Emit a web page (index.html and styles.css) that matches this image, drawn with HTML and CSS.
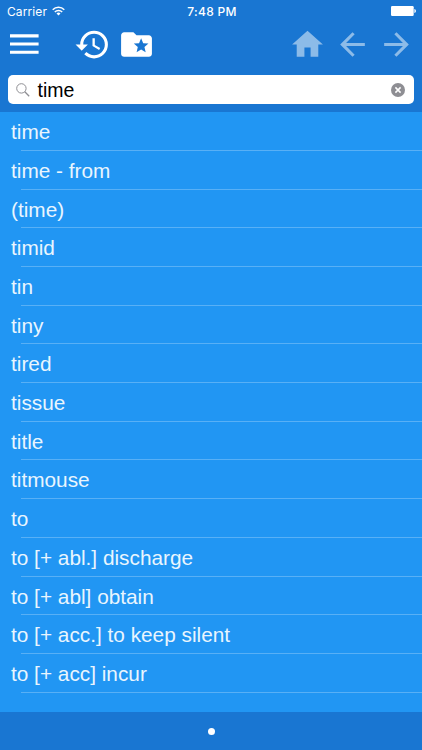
FILE: index.html
```html
<!DOCTYPE html>
<html lang="en">
<head>
<meta charset="UTF-8">
<meta name="viewport" content="width=device-width, initial-scale=1.0">
<title>Dictionary</title>
<link rel="stylesheet" href="styles.css">
</head>
<body>

<header class="header">
  <div class="status">
    <div class="carrier">
      <span>Carrier</span>
      <svg class="wifi" viewBox="0 0 13 10" fill="none" stroke="#fff" stroke-width="1.5">
        <path d="M.7 3.7a8.2 8.2 0 0 1 11.6 0M2.8 6a5.2 5.2 0 0 1 7.4 0"/>
        <path d="M6.5 9.6 4.5 7.6a2.8 2.8 0 0 1 4 0z" fill="#fff" stroke="none"/>
      </svg>
    </div>
    <span class="clock">7:48 PM</span>
    <svg class="battery" viewBox="0 0 25 10" fill="#fff">
      <rect width="22.7" height="10" rx="1.2"/>
      <path d="M23.4 3c2 .2 2 3.8 0 4z"/>
    </svg>
  </div>

  <nav class="toolbar">
    <svg class="menu" viewBox="0 0 29 21" fill="#fff">
      <path d="M0 .3h28.6v3.1H0zM0 8.5h28.6v3.1H0zM0 16.7h28.6v3.1H0z"/>
    </svg>
    <svg class="icon history" viewBox="0 0 24 24" fill="#fff">
      <path d="M13 3a9 9 0 0 0-9 9H1l3.89 3.89.07.14L9 12H6c0-3.87 3.13-7 7-7s7 3.13 7 7-3.13 7-7 7c-1.93 0-3.68-.79-4.94-2.06l-1.42 1.42A8.95 8.95 0 0 0 13 21a9 9 0 0 0 0-18zm-1 5v5l4.28 2.54.72-1.21-3.5-2.08V8z"/>
    </svg>
    <svg class="icon folder" viewBox="0 0 24 24" fill="#fff">
      <path d="M20 6h-8l-2-2H4c-1.1 0-1.99.9-1.99 2L2 18c0 1.1.9 2 2 2h16c1.1 0 2-.9 2-2V8c0-1.1-.9-2-2-2zm-2.06 11L15 15.28 12.06 17l.78-3.33-2.59-2.24 3.41-.29L15 8l1.34 3.14 3.41.29-2.59 2.24z"/>
    </svg>
    <svg class="icon dim home" viewBox="0 0 24 24" fill="#fff">
      <path d="M10 20v-6h4v6h5v-8h3L12 3 2 12h3v8z"/>
    </svg>
    <svg class="icon dim back" viewBox="0 0 24 24" fill="#fff">
      <path d="M20 11H7.83l5.59-5.59L12 4l-8 8 8 8 1.41-1.41L7.83 13H20z"/>
    </svg>
    <svg class="icon dim forward" viewBox="0 0 24 24" fill="#fff">
      <path d="M12 4l-1.41 1.41L16.17 11H4v2h12.17l-5.58 5.59L12 20l8-8z"/>
    </svg>
  </nav>

  <div class="search">
    <svg class="lens" viewBox="0 0 14 14" fill="none" stroke="#8e8e93">
      <circle cx="5.4" cy="5.4" r="4.7"/>
      <path d="M8.8 8.8l4.4 4.4" stroke-width="1.3"/>
    </svg>
    <span class="query">time</span>
    <svg class="clear" viewBox="0 0 14 14">
      <circle cx="7" cy="7" r="7" fill="#8e8e93"/>
      <path d="M4.4 4.4l5.2 5.2M9.6 4.4L4.4 9.6" stroke="#fff" stroke-width="1.5"/>
    </svg>
  </div>
</header>

<ul class="words">
  <li>time</li>
  <li>time - from</li>
  <li>(time)</li>
  <li>timid</li>
  <li>tin</li>
  <li>tiny</li>
  <li>tired</li>
  <li>tissue</li>
  <li>title</li>
  <li>titmouse</li>
  <li>to</li>
  <li>to [+ abl.] discharge</li>
  <li>to [+ abl] obtain</li>
  <li>to [+ acc.] to keep silent</li>
  <li>to [+ acc] incur</li>
</ul>

<footer class="pager"><span class="dot"></span></footer>

</body>
</html>
```
FILE: styles.css
```css
* { box-sizing: border-box; }
body {
  margin: 0; height: 750px; overflow: hidden;
  display: flex; flex-direction: column;
  background: #2196f3; color: #fff;
  font-family: "Liberation Sans", Arial, sans-serif;
}
svg { display: block; flex: none; }

.header { height: 112px; background: #1976d2; }

/* Status bar */
.status {
  display: grid; grid-template-columns: 1fr auto 1fr; align-items: center;
  height: 22px; padding: 0 6px 0 7px;
  font-family: Inter, sans-serif; font-size: 12px;
}
.carrier { display: flex; align-items: center; gap: 5px; letter-spacing: .1px; }
.wifi { width: 13px; height: 10px; }
.clock { padding-left: 1px; font-weight: 500; letter-spacing: .3px; }
.battery { width: 25px; height: 10px; justify-self: end; }

/* Toolbar */
.toolbar { display: flex; align-items: center; height: 44px; padding: 0 7px 0 10px; }
.menu { width: 29px; height: 21px; }
.icon { width: 37px; height: 37px; }
.dim { opacity: .5; }
.history { margin-left: 35px; }
.folder { margin-left: 7px; }
.home { margin-left: auto; }
.back { margin-left: 8px; }
.forward { margin-left: 7px; }

/* Search field */
.search {
  display: flex; align-items: center;
  height: 29px; margin: 9.4px 8px 0; padding: 0 9px 0 8px;
  background: #fff; border-radius: 5px; color: #000;
}
.lens { width: 14px; height: 14px; }
.query { flex: 1; margin-left: 7.5px; font-size: 19.5px; line-height: 30px; }
.clear { width: 14px; height: 14px; }

/* Word list */
.words { flex: 1; margin: 0; padding: .3px 0 0; list-style: none; }
.words li {
  height: 38.7px; padding-left: 11px;
  font-size: 20.8px; line-height: 40px; color: #e9f5fe;
  background: linear-gradient(#58b0f6, #58b0f6) 21px 100% / 100% 1px no-repeat;
}

.pager {
  display: flex; align-items: center; justify-content: center;
  height: 38px; background: #1976d2;
}
.dot { width: 7px; height: 7px; border-radius: 50%; background: #fff; }
```
